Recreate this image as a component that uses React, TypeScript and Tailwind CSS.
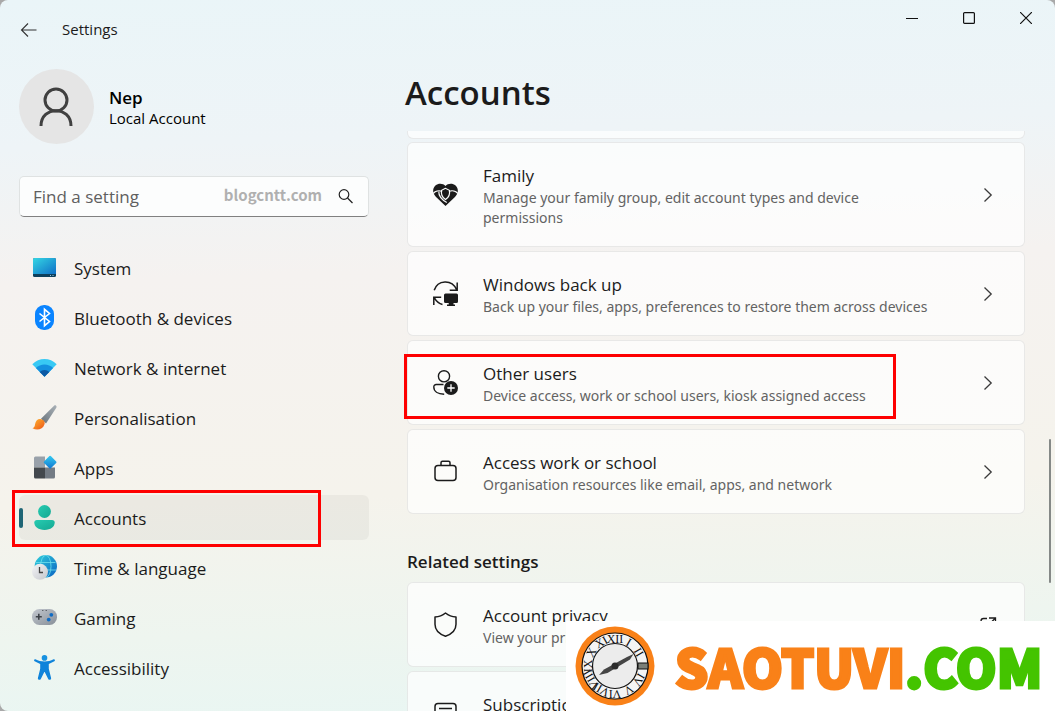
import React from 'react'

const SystemIcon = () => (
  <svg width="25" height="25" viewBox="0 0 25 25">
    <defs>
      <linearGradient id="sys" x1="0" y1="0" x2="1" y2="1">
        <stop offset="0" stopColor="#35d6e4" />
        <stop offset="1" stopColor="#0f6fc6" />
      </linearGradient>
    </defs>
    <rect x="1" y="3" width="23" height="19" rx="1.5" fill="#0d3f5c" />
    <path d="M2.5 3h20A1.5 1.5 0 0 1 24 4.500V19H1V4.500A1.500 1.500 0 0 1 2.500 3z" fill="url(#sys)" />
    <path d="M18 20.500h1M20.500 20.500h1" stroke="#9ccbe0" />
  </svg>
)

const BluetoothIcon = () => (
  <svg width="25" height="25" viewBox="0 0 25 25">
    <rect x="3" y="0" width="19" height="25" rx="9" fill="#0a84ff" />
    <path d="M7.500 8.500l10 8-5 4.200V4.300l5 4.200-10 8" fill="none" stroke="#fff" strokeWidth="1.600" />
  </svg>
)

const NetworkIcon = () => (
  <svg width="25" height="25" viewBox="0 0 25 25">
    <path d="M0.300 9.200C7 2.300 18 2.300 24.700 9.200L12.500 21.800z" fill="#38c9f4" />
    <path d="M3.900 13C8.500 8.200 16.500 8.200 21.100 13L12.500 21.800z" fill="#1490df" />
    <path d="M7.700 16.900C10.300 14.200 14.700 14.200 17.300 16.900L12.500 21.800z" fill="#0c59a4" />
  </svg>
)

const BrushIcon = () => (
  <svg width="25" height="25" viewBox="0 0 25 25">
    <defs>
      <linearGradient id="brush" x1="0" y1="1" x2="1" y2="0">
        <stop offset="0" stopColor="#68727a" />
        <stop offset="1" stopColor="#a9b1b7" />
      </linearGradient>
      <linearGradient id="tip" x1="0" y1="0" x2="1" y2="1">
        <stop offset="0" stopColor="#ffb62e" />
        <stop offset="1" stopColor="#ec5418" />
      </linearGradient>
    </defs>
    <path d="M22.300 0.600c1.300-.9 2.900.6 2 2.100L14 18.500 9 13.800z" fill="url(#brush)" />
    <path d="M9 14.200c2.900.6 4.400 2.600 3.400 5.300C10.900 24.300 5 25.800.5 23.200c2.300-.8 2.200-2.200 2.600-4.200.6-3.300 3-5.400 5.900-4.800z" fill="url(#tip)" />
  </svg>
)

const AppsIcon = () => (
  <svg width="25" height="25" viewBox="0 0 25 25">
    <defs>
      <linearGradient id="apps" x1="0" y1="0" x2="1" y2="1">
        <stop offset="0" stopColor="#35cdf2" />
        <stop offset="1" stopColor="#0f74cf" />
      </linearGradient>
    </defs>
    <path d="M3.500 1.500h9.500v11H2V3a1.500 1.500 0 0 1 1.500-1.500z" fill="#99a1aa" />
    <path d="M2 12.500h11v11H3.500A1.500 1.500 0 0 1 2 22z" fill="#43484d" />
    <path d="M13 12.500h10V22a1.500 1.500 0 0 1-1.500 1.500H13z" fill="#737b84" />
    <rect x="13.300" y="2.400" width="9.600" height="9.600" rx="1" transform="rotate(45 18.100 7.200)" fill="url(#apps)" />
  </svg>
)

const AccountsIcon = () => (
  <svg width="25" height="25" viewBox="0 0 25 25">
    <defs>
      <linearGradient id="acc" x1="0" y1="0" x2="1" y2="1">
        <stop offset="0" stopColor="#27cbb1" />
        <stop offset="1" stopColor="#14a892" />
      </linearGradient>
    </defs>
    <circle cx="12.500" cy="6.500" r="6.400" fill="url(#acc)" />
    <path d="M5 15h15c1.700 0 2.700 1 2.700 2.600C22.700 22 18.700 25 12.500 25S2.300 22 2.300 17.600C2.300 16 3.300 15 5 15z" fill="url(#acc)" />
  </svg>
)

const TimeIcon = () => (
  <svg width="25" height="25" viewBox="0 0 25 25">
    <defs>
      <linearGradient id="globe" x1="0" y1="0" x2="1" y2="1">
        <stop offset="0" stopColor="#2fd0dc" />
        <stop offset="1" stopColor="#0a62c2" />
      </linearGradient>
      <linearGradient id="clock" x1="0" y1="0" x2="1" y2="1">
        <stop offset="0" stopColor="#f4f4f6" />
        <stop offset="1" stopColor="#c4c7cc" />
      </linearGradient>
    </defs>
    <circle cx="13.800" cy="11.300" r="11.200" fill="url(#globe)" />
    <g fill="none" stroke="#6fe0ee" strokeWidth=".8">
      <ellipse cx="13.800" cy="11.300" rx="5.200" ry="11" />
      <path d="M4 7.500h19.500M10 15h14" />
    </g>
    <circle cx="8" cy="16.800" r="8" fill="url(#clock)" />
    <path d="M7.500 12v5.500H11" fill="none" stroke="#444" strokeWidth="1.300" />
  </svg>
)

const GamingIcon = () => (
  <svg width="25" height="25" viewBox="0 0 25 25">
    <defs>
      <linearGradient id="pad" x1="0" y1="0" x2="1" y2="1">
        <stop offset="0" stopColor="#c3c8cf" />
        <stop offset="1" stopColor="#878f98" />
      </linearGradient>
    </defs>
    <rect x="0" y="4" width="25" height="16" rx="7.500" fill="url(#pad)" />
    <path d="M6.800 8.800v6M3.800 11.800h6" stroke="#3d4248" strokeWidth="1.600" />
    <path d="M10.300 5.500h1M13.700 5.500h1" stroke="#3d4248" />
    <circle cx="19.300" cy="9.800" r="1.900" fill="#0f6cc4" />
    <circle cx="16.700" cy="14.600" r="1.900" fill="#0f6cc4" />
  </svg>
)

const AccessibilityIcon = () => (
  <svg width="25" height="25" viewBox="0 0 25 25">
    <circle cx="12.500" cy="2.900" r="2.800" fill="#1791e0" />
    <path
      d="M3.400 4.200c3 1.300 5.500 2.300 9.100 2.300s6.100-1 9.100-2.300c1.200-.4 1.900 1.500.8 2.100L16.800 9v4.800l2.300 9.300c.3 1.800-2.200 2.500-2.900.8L12.700 17h-.4l-3.500 6.900c-.7 1.700-3.200 1-2.900-.8l2.300-9.300V9L2.600 6.300c-1.100-.6-.4-2.500.8-2.100z"
      fill="#0f83da"
    />
  </svg>
)

const FamilyIcon = () => (
  <svg width="25" height="25" viewBox="0 0 25 25">
    <path
      d="M12.500 4C10.300 1.200 5.500.8 2.400 3.400.2 5.500-.3 8.600.6 11.300c.7 1.900 2 3.300 3.500 4.800l8.400 7.800 8.400-7.800c1.500-1.500 2.800-2.900 3.500-4.800.9-2.700.4-5.800-1.800-7.900-3.100-2.600-7.900-2.200-10.100.6z"
      fill="#1b1b1b"
    />
    <g fill="none" stroke="#fbfcfc" strokeWidth="1.200">
      <path d="M0 11.500C2 9.300 5.800 8 9 9.500M25 11.500C23 9.300 19.200 8 16 9.500" />
      <path d="M12.500 6.300L8.600 8.300c-.8 3.900.6 7 3.900 9.300 3.300-2.300 4.700-5.400 3.900-9.300z" />
      <path d="M5.800 9.500c-.2 4 2.300 7.800 8 11" />
    </g>
  </svg>
)

const BackupIcon = () => (
  <svg width="25" height="25" viewBox="0 0 25 25">
    <g fill="none" stroke="#1b1b1b" strokeWidth="1.500">
      <path d="M1.200 9.300C4.500-1.500 19-2 23.500 8.500M24.200 1.500v7.700h-7.500" />
      <path d="M0.800 24v-7.700h7.400M1.200 16.700c2 3.500 4.500 6 8.300 6.900" />
    </g>
    <path d="M12.500 12.500h11A1.500 1.500 0 0 1 25 14v6.500a1.500 1.500 0 0 1-1.500 1.500h-3v1.500H22V25h-8v-1.500h1.700V22h-3.200a1.500 1.500 0 0 1-1.500-1.500V14a1.500 1.500 0 0 1 1.500-1.500z" fill="#1b1b1b" />
  </svg>
)

const OtherUsersIcon = () => (
  <svg width="25" height="25" viewBox="0 0 25 25">
    <g fill="none" stroke="#1b1b1b" strokeWidth="1.400">
      <circle cx="11" cy="6.300" r="5.600" />
      <path d="M10.500 14.500H3.200A2.400 2.400 0 0 0 .8 17c0 4.300 3.900 7.200 10.400 7.200" />
    </g>
    <circle cx="18" cy="18" r="7" fill="#1b1b1b" />
    <path d="M18 14.300v7.400M14.300 18h7.400" stroke="#fff" strokeWidth="1.300" />
  </svg>
)

const WorkIcon = () => (
  <svg width="25" height="25" viewBox="0 0 25 25" fill="none" stroke="#1b1b1b" strokeWidth="1.500">
    <rect x="2" y="6.500" width="21" height="15" rx="3" />
    <path d="M8 6.500V3.700a1.500 1.500 0 0 1 1.500-1.500h6A1.500 1.500 0 0 1 17 3.700v2.800" />
  </svg>
)

const ShieldIcon = () => (
  <svg width="25" height="25" viewBox="0 0 25 25" fill="none" stroke="#1b1b1b" strokeWidth="1.500" strokeLinejoin="round">
    <path d="M12.500 1c3 2.400 6.200 3.700 10.500 4v7.300c0 5.600-3.800 9.700-10.500 11.900C5.800 22 2 17.900 2 12.300V5c4.300-.3 7.500-1.600 10.500-4z" />
  </svg>
)

const SubscriptionIcon = () => (
  <svg width="25" height="25" viewBox="0 0 25 25" fill="none" stroke="#1b1b1b" strokeWidth="1.500">
    <rect x="2" y="2.500" width="21" height="20" rx="3" />
    <path d="M6 7.500h13M6 12.500h13" />
  </svg>
)

const ChevronIcon = () => (
  <svg width="20" height="20" viewBox="0 0 20 20" fill="none" stroke="#3a3a3a" strokeWidth="1.300">
    <path d="M6.500 3.500L13.200 10l-6.700 6.500" />
  </svg>
)

const ExternalIcon = () => (
  <svg width="20" height="20" viewBox="0 0 20 20" fill="none" stroke="#1b1b1b" strokeWidth="1.300">
    <path d="M9 3.500H5.500a2.500 2.500 0 0 0-2.500 2.500v8.500A2.500 2.500 0 0 0 5.500 17H14a2.500 2.500 0 0 0 2.500-2.500V11M11 3h6.500v6M17 3.500l-7 7" />
  </svg>
)

const numerals = ['XII', 'I', 'II', '', 'IV', 'V', 'VI', 'VII', 'VIII', 'IX', 'X', 'XI']

const ClockLogo = () => (
  <svg width="80" height="80" viewBox="0 0 80 80" className="shrink-0">
    <circle cx="40" cy="40" r="39.500" fill="#f98118" />
    <circle cx="40" cy="40" r="33" fill="#f4f4f4" stroke="#111" strokeWidth="1.200" />
    <circle cx="40" cy="40" r="22.500" fill="#ececec" stroke="#111" strokeWidth="1.200" />
    {numerals.map((n, i) => (
      <text
        key={i}
        x="40"
        y="16.500"
        textAnchor="middle"
        transform={`rotate(${i * 30} 40 40)`}
        fontFamily="Liberation Serif, serif"
        fontSize="12"
        fill="#111"
      >
        {n}
      </text>
    ))}
    <rect x="63" y="37" width="10" height="6" fill="#7b7f78" stroke="#111" />
    <path d="M24 49l5-5.500L52 31l6.500-3-3.500 5.500L32.500 47z" fill="#454545" />
    <circle cx="40" cy="40" r="3.500" fill="#2c2c2c" />
  </svg>
)

const navItems = [
  { text: 'System', icon: <SystemIcon /> },
  { text: 'Bluetooth & devices', icon: <BluetoothIcon /> },
  { text: 'Network & internet', icon: <NetworkIcon /> },
  { text: 'Personalisation', icon: <BrushIcon /> },
  { text: 'Apps', icon: <AppsIcon /> },
  { text: 'Accounts', icon: <AccountsIcon />, active: true },
  { text: 'Time & language', icon: <TimeIcon /> },
  { text: 'Gaming', icon: <GamingIcon /> },
  { text: 'Accessibility', icon: <AccessibilityIcon /> },
]

const accountCards = [
  { title: 'Family', desc: 'Manage your family group, edit account types and device permissions', icon: <FamilyIcon /> },
  { title: 'Windows back up', desc: 'Back up your files, apps, preferences to restore them across devices', icon: <BackupIcon /> },
  { title: 'Other users', desc: 'Device access, work or school users, kiosk assigned access', icon: <OtherUsersIcon />, marked: true },
  { title: 'Access work or school', desc: 'Organisation resources like email, apps, and network', icon: <WorkIcon /> },
]

const relatedCards = [
  { title: 'Account privacy', desc: 'View your privacy settings', icon: <ShieldIcon /> },
  { title: 'Subscriptions', desc: '', icon: <SubscriptionIcon /> },
]

type CardProps = {
  title: string
  desc: string
  icon: React.ReactNode
  marked?: boolean
  external?: boolean
}

function SettingCard({ title, desc, icon, marked, external }: CardProps) {
  return (
    <button className="relative flex w-full items-center rounded-md border border-black/8 bg-white/70 py-[18px] pr-[26px] pl-[25px] text-left">
      <span className="shrink-0">{icon}</span>
      <span className="ml-[25px] min-h-[47px] flex-1 pt-[3px] pr-10">
        <span className="block text-[17px] leading-6">{title}</span>
        <span className="block font-['Noto_Sans',sans-serif] text-[14px] leading-5 text-[#636363]">{desc}</span>
      </span>
      <span className="shrink-0">{external ? <ExternalIcon /> : <ChevronIcon />}</span>
      {marked && <span className="absolute top-[13px] -left-1 h-[65px] w-[492px] border-3 border-[#fe0000]" />}
    </button>
  )
}

export default function App() {
  return (
    <div className="relative h-screen overflow-hidden bg-[#a9a9a9] font-['Open_Sans','Noto_Sans',sans-serif] text-[#1b1b1b]">
      <div className="flex h-full flex-col overflow-hidden rounded-lg bg-[linear-gradient(178deg,#eaf5f8_0%,#eef4f7_20%,#f5f2f0_38%,#f5f3ec_68%,#eef5ef_86%,#e8f6f3_100%)]">
        <header className="flex h-[60px] shrink-0 items-start justify-between">
          <div className="flex h-[59px] items-center pl-5">
            <button aria-label="Back">
              <svg width="18" height="18" viewBox="0 0 18 18" fill="none" stroke="#333" strokeWidth="1.100">
                <path d="M16.500 9H2M8 2.500L1.500 9 8 15.500" />
              </svg>
            </button>
            <span className="ml-6 pb-0.5 text-[15px] leading-5">Settings</span>
          </div>
          <div className="flex h-9 items-center pr-px">
            <button aria-label="Minimise" className="flex w-[57px] justify-center">
              <svg width="12" height="12" viewBox="0 0 12 12"><path d="M0 6.500h12" stroke="#111" /></svg>
            </button>
            <button aria-label="Maximise" className="flex w-[57px] justify-center">
              <svg width="12" height="12" viewBox="0 0 12 12"><rect x=".6" y=".6" width="10.800" height="10.800" rx="1" fill="none" stroke="#111" strokeWidth="1.200" /></svg>
            </button>
            <button aria-label="Close" className="flex w-[57px] justify-center">
              <svg width="12" height="12" viewBox="0 0 12 12"><path d="M0 0l12 12M12 0L0 12" stroke="#111" strokeWidth="1.200" /></svg>
            </button>
          </div>
        </header>

        <div className="flex min-h-0 flex-1">
          <aside className="w-[388px] shrink-0 px-[19px] pt-[9px]">
            <div className="flex items-center">
              <div className="flex h-[75px] w-[75px] items-center justify-center rounded-full bg-[#e5e5e5]">
                <svg width="35" height="40" viewBox="0 0 35 40" fill="none" stroke="#404040" strokeWidth="3">
                  <circle cx="17" cy="13" r="11" />
                  <path d="M2 39C2 18.500 32 18.500 32 39" />
                </svg>
              </div>
              <div className="ml-[15px] pt-0.5">
                <p className="text-[17px] leading-5 font-semibold text-black">Nep</p>
                <p className="text-[15px] leading-5 text-black">Local Account</p>
              </div>
            </div>

            <div className="mt-8 flex h-[41px] items-center rounded-[5px] border border-b-[#808080] border-[#dfe2e2] bg-white/80 pr-[15px] pl-[13px]">
              <input
                type="text"
                aria-label="Find a setting"
                placeholder="Find a setting"
                className="min-w-0 flex-1 bg-transparent text-[17px] outline-none placeholder:text-[#5f5f5f]"
              />
              <span className="mr-4 pb-1 font-['Noto_Sans_CJK_JP',sans-serif] text-[15px] leading-5 font-bold text-[#b0b0b0]">
                blogcntt.com
              </span>
              <svg width="15" height="15" viewBox="0 0 15 15" fill="none" stroke="#222" strokeWidth="1.200">
                <circle cx="6" cy="5.500" r="4.800" />
                <path d="M9.500 9l5 5" />
              </svg>
            </div>

            <nav className="mt-7 flex flex-col gap-[5px]">
              {navItems.map((item) => (
                <a
                  key={item.text}
                  href="#"
                  className={`relative flex h-[45px] items-center gap-[17px] rounded-md pl-[13px] text-[17px] ${item.active ? "bg-black/4" : ""}`}
                >
                  {item.active && <span className="absolute left-0 h-5 w-1 rounded-full bg-[#1f6575]" />}
                  {item.icon}
                  <span className="pt-0.5">{item.text}</span>
                  {item.active && <span className="absolute -top-[5px] -left-[7px] h-[57px] w-[309px] border-3 border-[#fe0000]" />}
                </a>
              ))}
            </nav>
          </aside>

          <main className="flex min-w-0 flex-1 flex-col">
            <h1 className="h-[71px] shrink-0 pt-2 pl-[17px] text-[33px] leading-[50px] font-semibold">Accounts</h1>
            <div className="relative min-h-0 flex-1 overflow-hidden pr-[30px] pl-[19px]">
              <div className="h-2 rounded-b-md border border-t-0 border-black/8 bg-white/70" />
              <div className="mt-[3px] flex flex-col gap-1">
                {accountCards.map((card) => (
                  <SettingCard key={card.title} {...card} />
                ))}
              </div>
              <h2 className="mt-9 mb-2 text-[17px] leading-6 font-semibold">Related settings</h2>
              <div className="flex flex-col gap-1">
                {relatedCards.map((card) => (
                  <SettingCard key={card.title} {...card} external />
                ))}
              </div>
              <div className="absolute top-[308px] right-1 h-[144px] w-[2px] rounded-full bg-[#858987]" />
            </div>
          </main>
        </div>
      </div>

      <div className="absolute right-0 bottom-0 flex h-[90px] w-[489px] items-center bg-white pl-[9px]">
        <ClockLogo />
        <p className="ml-5 font-['Noto_Sans_CJK_JP',sans-serif] text-[52px] leading-[60px] font-black whitespace-nowrap text-[#f98118] [-webkit-text-stroke:3px_currentColor]">
          SAOTUVI<span className="text-[#44c400]">.COM</span>
        </p>
      </div>
    </div>
  )
}
